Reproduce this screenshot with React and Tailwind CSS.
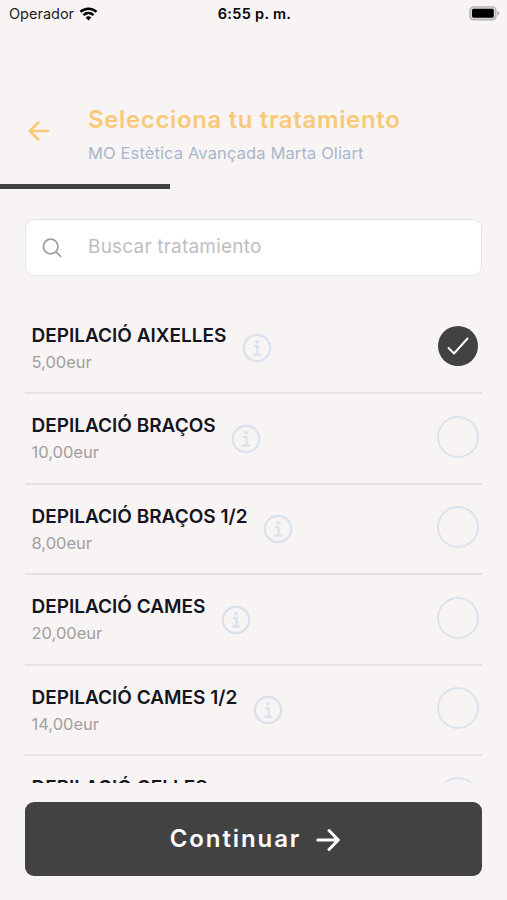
import React, { useState } from 'react';
import clsx from 'clsx';

const TREATMENTS = [
    { id: 1, name: 'DEPILACIÓ AIXELLES', price: '5,00eur' },
    { id: 2, name: 'DEPILACIÓ BRAÇOS', price: '10,00eur' },
    { id: 3, name: 'DEPILACIÓ BRAÇOS 1/2', price: '8,00eur' },
    { id: 4, name: 'DEPILACIÓ CAMES', price: '20,00eur' },
    { id: 5, name: 'DEPILACIÓ CAMES 1/2', price: '14,00eur' },
    { id: 6, name: 'DEPILACIÓ CELLES' },
];

const WifiIcon = () => (
    <svg viewBox="0 0 18 14" className="w-[19px] h-[14px]" fill="none" stroke="#000" strokeWidth="2.5">
        <path d="M1 4.9C5.4.6 12.6.6 17 4.9" />
        <path d="M4 8.1c2.8-2.7 7.2-2.7 10 0" />
        <path d="M6.2 10.4c1.6-1.5 4-1.5 5.6 0L9 13.4z" fill="#000" stroke="none" />
    </svg>
);

const BatteryIcon = () => (
    <svg viewBox="0 0 31 15" className="w-[31px] h-[15px] -mt-[2px]">
        <rect x="0.9" y="0.9" width="26" height="12.8" rx="3.6" fill="#d8d6d5" stroke="#b5b3b3" strokeWidth="1.4" />
        <rect x="3" y="2.7" width="21.8" height="9" rx="1.6" fill="#000" />
        <path d="M28.4 5.2c1.3.4 2 1.1 2 2.1s-.7 1.7-2 2.1z" fill="#a9a7a7" />
    </svg>
);

const InfoIcon = () => (
    <svg viewBox="0 0 30 30" className="w-[30px] h-[30px]" fill="none" stroke="#d9e1ee" strokeWidth="2.2">
        <circle cx="15" cy="15" r="13.2" />
        <circle cx="15" cy="8.8" r="1.8" fill="#d9e1ee" stroke="none" />
        <path d="M12 13.2h3.5v8.3M11.3 21.7h7.8" />
    </svg>
);

const StatusBar = () => (
    <div className="h-[28px] flex items-center justify-between pl-[9px] pr-[7px] text-[14.5px] text-black">
        <div className="flex flex-1 items-center gap-[5px]">
            <span className="text-[#222]">Operador</span>
            <WifiIcon />
        </div>
        <span className="font-semibold tracking-[0.3px]">6:55 p. m.</span>
        <div className="flex flex-1 justify-end">
            <BatteryIcon />
        </div>
    </div>
);

const Header = () => (
    <header className="h-[156px] flex items-start pt-[76px]">
        <button className="w-[88px] pl-[28px] pt-[16px]">
            <svg viewBox="0 0 22 22" className="w-[22px] h-[22px]" fill="none" stroke="#f9c97a" strokeWidth="2.5" strokeLinecap="round" strokeLinejoin="round">
                <path d="M20 11H1.8M10.3 2.5L1.8 11l8.5 8.5" />
            </svg>
        </button>
        <div>
            <h1 className="text-[24px] leading-[32px] font-semibold tracking-[0.64px] text-[#f9c97a]">Selecciona tu tratamiento</h1>
            <p className="text-[16.5px] leading-[34px] font-normal tracking-[0.12px] text-[#aab6ce]">MO Estètica Avançada Marta Oliart</p>
        </div>
    </header>
);

const SearchBox = () => (
    <div className="mx-[25px] mt-[30px] h-[57px] flex items-center rounded-[9px] border-[1.5px] border-[#e6e3e3] bg-white">
        <svg viewBox="0 0 20 20" className="ml-[16px] w-5 h-5" fill="none" stroke="#9c9c9c" strokeWidth="1.7" strokeLinecap="round">
            <circle cx="8.7" cy="8.5" r="7.3" />
            <path d="M13.9 13.8l4.7 4.5" />
        </svg>
        <input
            type="text"
            placeholder="Buscar tratamiento"
            className="ml-[26px] w-[300px] outline-none text-[19px] font-normal tracking-[0.2px] placeholder:text-[#bebec1]"
        />
    </div>
);

const TreatmentRow = ({ item, selected, onSelect }) => (
    <li className="h-[90.4px] shrink-0 flex items-start border-b-2 border-[#e5e2e2] pl-[6.5px]">
        <div className="pt-[18px]">
            <p className="text-[19px] leading-[28px] font-semibold text-[#15141f]">{item.name}</p>
            {item.price && (
                <p className="text-[16.5px] leading-[25px] font-normal text-[#a0a0a0]">{item.price}</p>
            )}
        </div>
        <button className="ml-[15.5px] mt-[29.4px]">
            <InfoIcon />
        </button>
        <button onClick={onSelect} className="ml-auto mr-[3px] mt-[21.4px] flex h-[42px] w-[42px] items-center justify-center">
            <span
                className={clsx(
                    'flex items-center justify-center rounded-full',
                    selected ? 'h-[40px] w-[40px] bg-[#424242]' : 'h-[42px] w-[42px] border-2 border-[#dbe3ef]'
                )}
            >
                {selected && (
                    <svg viewBox="0 0 22 18" className="w-[22px] h-[18px]" fill="none" stroke="#fff" strokeWidth="1.9" strokeLinecap="round" strokeLinejoin="round">
                        <path d="M1.5 11l5.5 5.5L20.5 1.5" />
                    </svg>
                )}
            </span>
        </button>
    </li>
);

const App = () => {
    const [selectedId, setSelectedId] = useState(1);

    return (
        <div className="w-full h-[900px] flex flex-col overflow-hidden bg-[#f7f4f3] font-['Inter',sans-serif]">
            <StatusBar />
            <Header />
            {/* Step progress */}
            <div className="h-[5px] w-[170px] shrink-0 bg-[#424242]" />
            <SearchBox />
            <ul className="mx-[25px] mt-[28px] h-[479px] shrink-0 flex flex-col overflow-hidden">
                {TREATMENTS.map((item) => (
                    <TreatmentRow
                        key={item.id}
                        item={item}
                        selected={item.id === selectedId}
                        onSelect={() => setSelectedId(item.id)}
                    />
                ))}
            </ul>
            <button className="mx-[25px] mt-[19px] h-[74px] shrink-0 flex items-center justify-center gap-[15px] rounded-[9px] bg-[#424242] pl-[3px] text-white">
                <span className="text-[24px] font-semibold tracking-[1.9px]">Continuar</span>
                <svg viewBox="0 0 24 24" className="mt-[2px] w-6 h-6" fill="none" stroke="#fff" strokeWidth="3" strokeLinecap="round" strokeLinejoin="round">
                    <path d="M1.8 12h20.4M13 2.5l9.3 9.5-9.3 9.5" />
                </svg>
            </button>
        </div>
    );
};

export default App;
